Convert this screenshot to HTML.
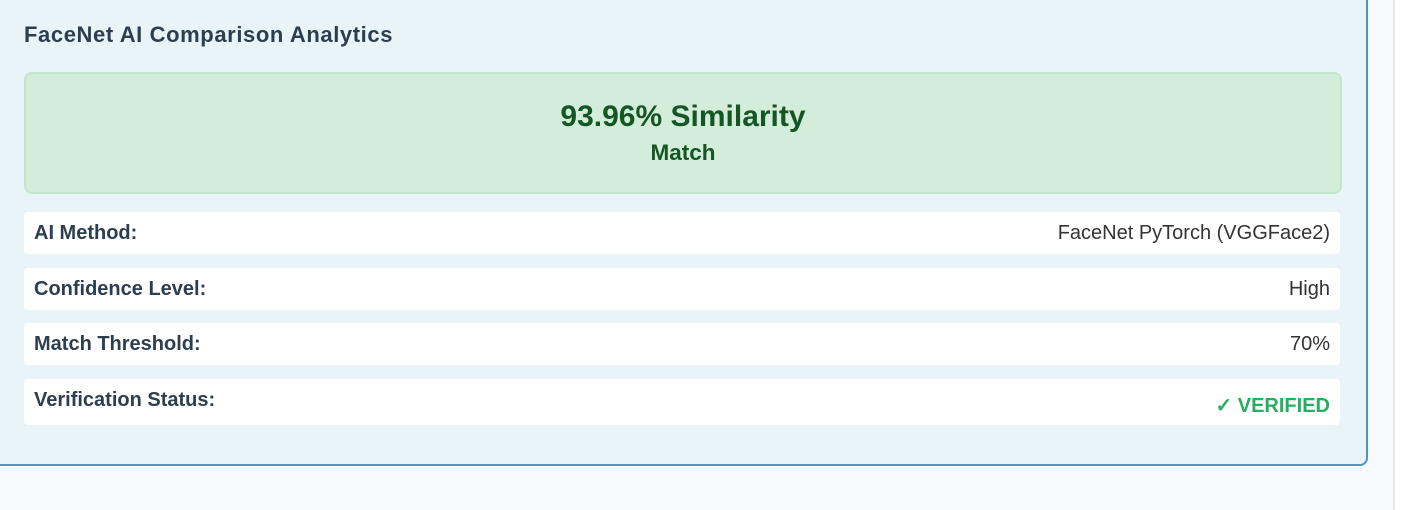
<!DOCTYPE html>
<html><head><style>
html,body{margin:0;padding:0;width:1406px;height:510px;background:#f8f9fa;overflow:hidden;font-family:"Liberation Sans",Arial,sans-serif;}
.sb{position:absolute;left:1393px;top:0;width:2px;height:510px;background:#e6e6e6}
.sbr{position:absolute;left:1395px;top:0;width:11px;height:510px;background:#fff}
.panel{position:absolute;left:-10px;top:-20px;width:1374px;height:482px;background:#e8f4f8;border:2px solid #4a98c4;border-radius:8px;}
h3{position:absolute;left:24px;top:22px;margin:0;font-size:22px;letter-spacing:0.6px;font-weight:bold;color:#2c3e50}
.res{position:absolute;left:24px;top:72px;width:1314px;height:118px;background:#d4edda;border:2px solid #c3e6cb;border-radius:8px;text-align:center;color:#155724}
.res .a{position:absolute;top:26px;width:100%;font-size:30px;font-weight:bold}
.res .b{position:absolute;top:66px;width:100%;font-size:22.5px;font-weight:bold}
.row{position:absolute;left:24px;width:1316px;background:#fff;border-radius:4px;font-size:20px;color:#2c3e50}
.row .l{position:absolute;left:10px;font-weight:bold}
.row .r{position:absolute;right:10px;color:#333}
</style></head><body>
<div class="panel"></div>
<h3>FaceNet AI Comparison Analytics</h3>
<div class="res"><div class="a">93.96% Similarity</div><div class="b">Match</div></div>
<div class="row" style="top:212px;height:42px"><span class="l" style="top:10px">AI Method:</span><span class="r" style="top:10px">FaceNet PyTorch (VGGFace2)</span></div>
<div class="row" style="top:268px;height:42px"><span class="l" style="top:10px">Confidence Level:</span><span class="r" style="top:10px">High</span></div>
<div class="row" style="top:323px;height:42px"><span class="l" style="top:10px">Match Threshold:</span><span class="r" style="top:10px">70%</span></div>
<div class="row" style="top:379px;height:46px"><span class="l" style="top:10px">Verification Status:</span><span class="r" style="top:14px;color:#27ae60;font-weight:bold">✓ VERIFIED</span></div>
<div class="sb"></div><div class="sbr"></div>
</body></html>
